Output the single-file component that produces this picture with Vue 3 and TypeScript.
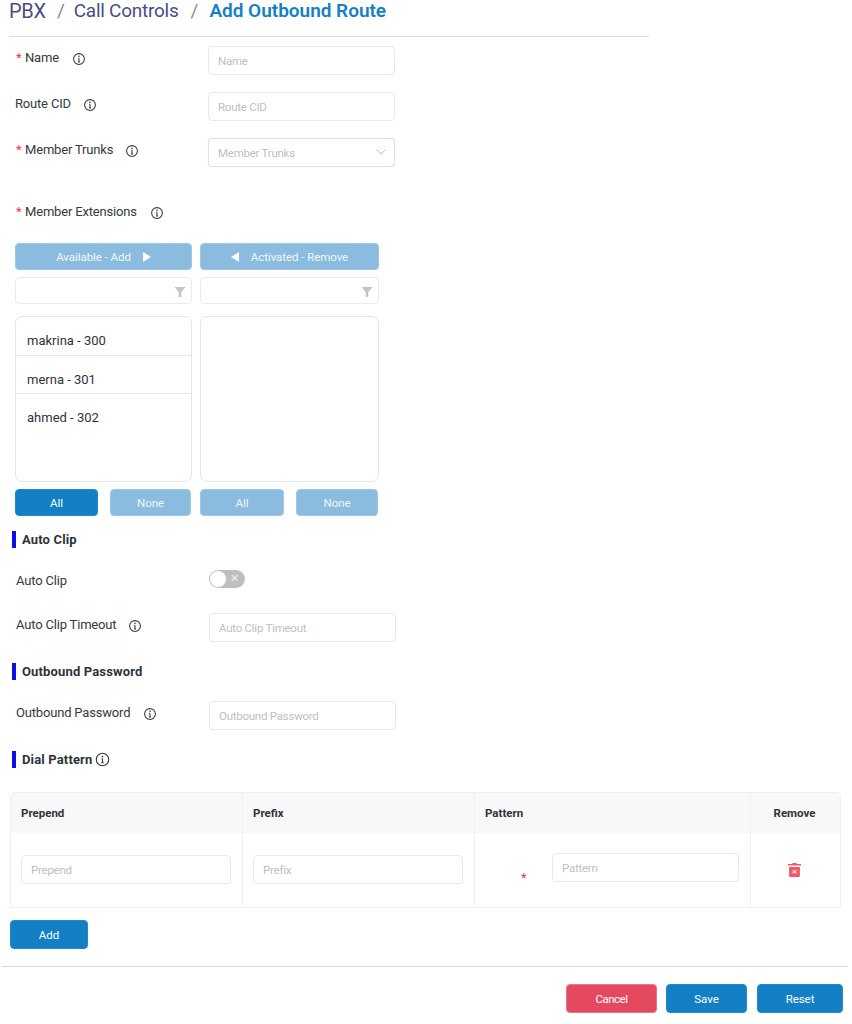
<script setup lang="ts">
const extensions: string[] = ['makrina - 300', 'merna - 301', 'ahmed - 302']
</script>

<template>
  <div class="page">
    <header class="crumbs">
      <span class="crumb">PBX</span>
      <span class="sep">/</span>
      <span class="crumb">Call Controls</span>
      <span class="sep">/</span>
      <span class="current">Add Outbound Route</span>
    </header>

    <div class="field first">
      <div class="label"><span class="star">*</span>Name<svg class="info gap-name" viewBox="0 0 14 14"><circle cx="7" cy="7" r="5.4" /><path d="M7 6.2v3.6M6 9.9h2M6.2 6.2h.8" /><circle class="dot" cx="7" cy="4.2" r=".8" /></svg></div>
      <div class="input">Name</div>
    </div>
    <div class="field second">
      <div class="label"><span class="plain">Route CID</span><svg class="info gap-std" viewBox="0 0 14 14"><circle cx="7" cy="7" r="5.4" /><path d="M7 6.2v3.6M6 9.9h2M6.2 6.2h.8" /><circle class="dot" cx="7" cy="4.2" r=".8" /></svg></div>
      <div class="input">Route CID</div>
    </div>
    <div class="field second">
      <div class="label"><span class="star">*</span>Member Trunks<svg class="info gap-std" viewBox="0 0 14 14"><circle cx="7" cy="7" r="5.4" /><path d="M7 6.2v3.6M6 9.9h2M6.2 6.2h.8" /><circle class="dot" cx="7" cy="4.2" r=".8" /></svg></div>
      <div class="input select">
        Member Trunks
        <svg class="chevron" viewBox="0 0 10 6"><path d="M.5.5 5 5.2 9.5.5" /></svg>
      </div>
    </div>
    <div class="label ext-label"><span class="star">*</span>Member Extensions<svg class="info gap-sec" viewBox="0 0 14 14"><circle cx="7" cy="7" r="5.4" /><path d="M7 6.2v3.6M6 9.9h2M6.2 6.2h.8" /><circle class="dot" cx="7" cy="4.2" r=".8" /></svg></div>

    <div class="dual">
      <div class="col left">
        <button class="btn pale head">Available - Add<span class="tri right-tri"></span></button>
        <div class="filter"><svg viewBox="0 0 12 12"><path d="M.5 1h11L7.3 6.2V11H4.7V6.2z" /></svg></div>
        <ul class="list">
          <li v-for="item in extensions" :key="item">{{ item }}</li>
        </ul>
        <div class="pair">
          <button class="btn solid">All</button>
          <button class="btn pale">None</button>
        </div>
      </div>
      <div class="col right">
        <button class="btn pale head"><span class="tri left-tri"></span>Activated - Remove</button>
        <div class="filter"><svg viewBox="0 0 12 12"><path d="M.5 1h11L7.3 6.2V11H4.7V6.2z" /></svg></div>
        <ul class="list"></ul>
        <div class="pair">
          <button class="btn pale">All</button>
          <button class="btn pale">None</button>
        </div>
      </div>
    </div>

    <h3 class="section s1">Auto Clip</h3>
    <div class="field toggle-row">
      <div class="label plain-row">Auto Clip</div>
      <div class="toggle"><span class="knob"></span><span class="x">✕</span></div>
    </div>
    <div class="field timeout">
      <div class="label plain-row">Auto Clip Timeout<svg class="info gap-std" viewBox="0 0 14 14"><circle cx="7" cy="7" r="5.4" /><path d="M7 6.2v3.6M6 9.9h2M6.2 6.2h.8" /><circle class="dot" cx="7" cy="4.2" r=".8" /></svg></div>
      <div class="input">Auto Clip Timeout</div>
    </div>

    <h3 class="section s2">Outbound Password</h3>
    <div class="field password">
      <div class="label plain-row">Outbound Password<svg class="info gap-sec" viewBox="0 0 14 14"><circle cx="7" cy="7" r="5.4" /><path d="M7 6.2v3.6M6 9.9h2M6.2 6.2h.8" /><circle class="dot" cx="7" cy="4.2" r=".8" /></svg></div>
      <div class="input">Outbound Password</div>
    </div>

    <h3 class="section s3">Dial Pattern<svg class="info dial" viewBox="0 0 14 14"><circle cx="7" cy="7" r="5.8" /><path d="M7 6.2v3.6M6 9.9h2M6.2 6.2h.8" /><circle class="dot" cx="7" cy="4.2" r=".8" /></svg></h3>

    <div class="table">
      <div class="th c1">Prepend</div>
      <div class="th c2">Prefix</div>
      <div class="th c3">Pattern</div>
      <div class="th c4">Remove</div>
      <div class="td c1"><div class="input cell">Prepend</div></div>
      <div class="td c2"><div class="input cell">Prefix</div></div>
      <div class="td c3">
        <span class="cell-star">*</span>
        <div class="input pattern">Pattern</div>
      </div>
      <div class="td c4">
        <svg class="trash" viewBox="1 1 12 14.4" preserveAspectRatio="none"><path d="M5 2V1h4v1h4v1.6H1V2z" /><path fill-rule="evenodd" d="M2 5h10v9.4a1 1 0 0 1-1 1H3a1 1 0 0 1-1-1zM5.6 8 5 8.6 6.4 10 5 11.4l.6.6L7 10.6 8.4 12l.6-.6L7.6 10 9 8.6 8.4 8 7 9.4z" /></svg>
      </div>
    </div>

    <button class="btn solid add">Add</button>
    <div class="divider"></div>
    <footer class="actions">
      <button class="btn danger">Cancel</button>
      <button class="btn solid save">Save</button>
      <button class="btn solid reset">Reset</button>
    </footer>
  </div>
</template>

<style>
html, body { background: #ffffff; }
</style>

<style scoped>
.page {
  width: 852px;
  height: 1024px;
  overflow: hidden;
  font-family: Roboto, "Liberation Sans", sans-serif;
  font-size: 13px;
  color: #343a40;
  background: #fff;
  box-sizing: border-box;
}
.crumbs {
  width: 640px;
  height: 37px;
  margin-left: 9px;
  box-sizing: border-box;
  border-bottom: 1px solid #d8dbe6;
  font-size: 19px;
  line-height: 22px;
  display: flex;
  gap: 12px;
}
.crumb { color: #4b4d85; letter-spacing: -0.25px; }
.crumb:first-child { font-size: 20px; margin-right: -1px; }
.sep { color: #8a8a9a; margin-right: -3px; }
.current { color: #1380c6; font-weight: 600; letter-spacing: -0.02px; margin-left: 2px; }

.field { display: flex; height: 29px; }
.first { margin-top: 9px; }
.second { margin-top: 17px; }
.label {
  width: 192px;
  padding-left: 16px;
  flex: none;
  display: flex;
  align-items: flex-start;
  line-height: 24px;
  letter-spacing: -0.18px;
  white-space: nowrap;
}
.plain { margin-left: -1px; }
.star { color: #f0354a; width: 9px; font-size: 13px; letter-spacing: 0; }
.info {
  width: 14px;
  height: 14px;
  margin-top: 6px;
  fill: none;
  stroke: #34383c;
  stroke-width: 1.05;
  flex: none;
}
.info .dot { fill: #34383c; stroke: none; }
.gap-name { margin-left: 13px; }
.gap-std { margin-left: 12px; }
.gap-sec { margin-left: 13px; }
.input {
  box-sizing: border-box;
  width: 187px;
  height: 29px;
  border: 1px solid #e8e9ec;
  border-radius: 4px;
  padding-left: 9px;
  line-height: 29px;
  font-size: 11.5px;
  letter-spacing: -0.25px;
  color: #bdbfc3;
  background: #fff;
  position: relative;
}
.select { border-color: #dfe1e5; box-shadow: 0 0 1px #d8dadf; }
.chevron {
  position: absolute;
  right: 8px;
  top: 10px;
  width: 10px;
  height: 6px;
  fill: none;
  stroke: #b9bcc1;
}
.ext-label { margin-top: 33px; width: auto; }

.dual {
  display: flex;
  gap: 8px;
  margin-top: 19px;
  margin-left: 15px;
}
.col { flex: none; }
.left { width: 177px; }
.right { width: 179px; }
.btn {
  display: block;
  box-sizing: border-box;
  border: 1px solid transparent;
  border-radius: 4px;
  font-family: inherit;
  font-size: 11.5px;
  letter-spacing: -0.06px;
  color: #fff;
  padding: 0;
  cursor: pointer;
}
.pale { background: #8bbce0; border-color: #9cc6ea; color: #f0f6fb; }
.solid { background: #1380c6; border-color: #2289cc; color: #fff; }
.danger { background: #e4495f; border-color: #ec7484; color: #fff; letter-spacing: -0.5px; }
.head {
  width: 100%;
  height: 27px;
  display: flex;
  align-items: center;
  justify-content: center;
}
.tri { width: 0; height: 0; border-style: solid; }
.right-tri {
  border-width: 5px 0 5px 8px;
  border-color: transparent transparent transparent #fff;
  margin-left: 12px;
}
.left-tri {
  border-width: 5px 8px 5px 0;
  border-color: transparent #fff transparent transparent;
  margin-right: 12px;
}
.filter {
  box-sizing: border-box;
  height: 27px;
  margin-top: 7px;
  border: 1px solid #e9eaed;
  border-radius: 4px;
  display: flex;
  justify-content: flex-end;
  align-items: center;
  padding: 3px 5px 0 0;
}
.filter svg { width: 12px; height: 12px; fill: #c4c5c7; }
.list {
  box-sizing: border-box;
  height: 166px;
  margin: 12px 0 0;
  padding: 0;
  list-style: none;
  border: 1px solid #e4e5e8;
  border-radius: 7px;
}
.list li {
  box-sizing: border-box;
  height: 38.6px;
  padding: 14px 0 0 11px;
  line-height: 20px;
  font-size: 13px;
  color: #2f3337;
  border-bottom: 1px solid #e4e5e8;
}
.list li:last-child { border-bottom: none; }
.pair {
  display: flex;
  justify-content: space-between;
  margin-top: 7px;
}
.pair .btn { height: 27px; }
.left .pair .btn:first-child { width: 83px; }
.left .pair .btn:last-child { width: 81px; margin-right: 1px; }
.right .pair .btn:first-child { width: 84px; }
.right .pair .btn:last-child { width: 82px; margin-right: 1px; }

.section {
  margin: 0 0 0 12px;
  padding-left: 6px;
  height: 17px;
  border-left: 4px solid #0d0de8;
  font-size: 13px;
  font-weight: 700;
  line-height: 17px;
  letter-spacing: 0.15px;
  color: #2f3337;
  display: flex;
  align-items: center;
}
.s1 { margin-top: 15px; }
.s2 { margin-top: 21px; }
.s3 { margin-top: 21px; }
.dial {
  width: 15px;
  height: 15px;
  margin: 0 0 0 3px;
}
.toggle-row { margin-top: 22px; height: 18px; }
.plain-row { width: 193px; }
.toggle-row .plain-row { line-height: 22px; }
.toggle {
  width: 36px;
  height: 18px;
  border-radius: 9px;
  background: #bfbfbf;
  position: relative;
  display: block;
}
.knob {
  position: absolute;
  left: 1px;
  top: 1px;
  width: 16px;
  height: 16px;
  border-radius: 50%;
  background: #fff;
}
.x {
  position: absolute;
  left: 21px;
  top: 0;
  line-height: 18px;
  font-size: 11px;
  color: #f2f2f2;
}
.timeout { margin-top: 25px; }
.password { margin-top: 21px; }

.table {
  margin: 24px 0 0 10px;
  width: 831px;
  box-sizing: border-box;
  border: 1px solid #f0f0f2;
  border-radius: 4px 4px 0 0;
  display: grid;
  grid-template-columns: 232px 232px 276px 1fr;
  grid-template-rows: 40px 74px;
}
.th {
  background: #f8f8f9;
  font-weight: 700;
  font-size: 11.5px;
  color: #2f3337;
  line-height: 40px;
  padding-left: 10px;
  border-right: 1px solid #f0f0f2;
}
.th.c4 { padding: 0 2px 0 0; text-align: center; border-right: none; }
.td {
  position: relative;
  border-right: 1px solid #f0f0f2;
  padding: 22px 0 0 10px;
}
.td.c4 { border-right: none; text-align: center; padding: 30px 2px 0 0; }
.cell { width: 210px; }
.pattern { width: 187px; margin: -2px 0 0 67px; }
.cell-star {
  position: absolute;
  left: 46px;
  top: 38px;
  color: #f0354a;
  font-size: 13px;
  line-height: 14px;
}
.trash { width: 13px; height: 14px; fill: #ee5a69; }
.add {
  width: 78px;
  height: 29px;
  margin: 12px 0 0 10px;
}
.divider {
  height: 1px;
  margin: 17px 4px 0 2px;
  background: #d9dae0;
}
.actions {
  display: flex;
  justify-content: flex-end;
  gap: 9px;
  margin-top: 17px;
  padding-right: 9px;
}
.actions .btn { height: 29px; }
.danger { width: 91px; }
.save { width: 81px; }
.reset { width: 86px; margin-left: 1px; }
</style>
